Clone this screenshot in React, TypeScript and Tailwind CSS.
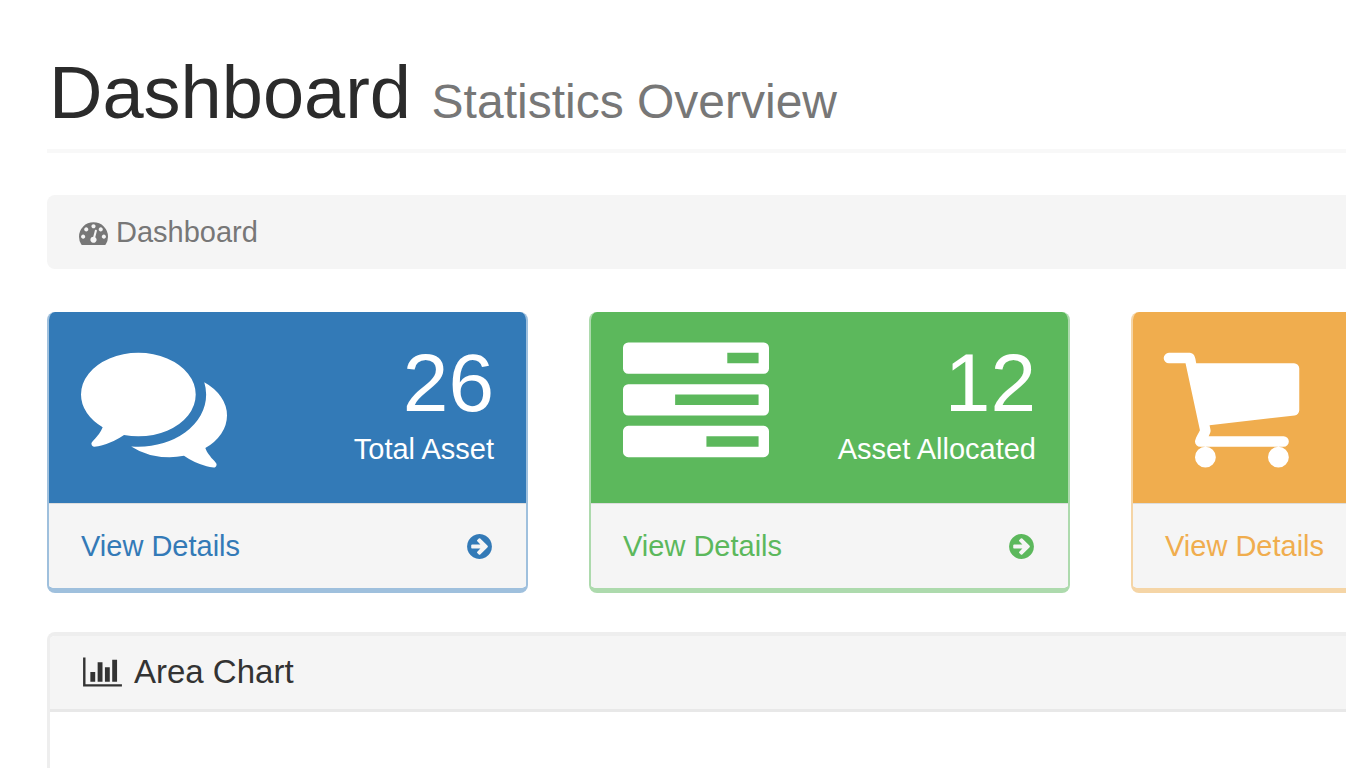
import type { ReactNode } from "react";

type IconProps = { d: string; className: string; viewBox?: string };

function Icon({ d, className, viewBox = "0 0 1792 1792" }: IconProps) {
  return (
    <svg viewBox={viewBox} className={`overflow-visible ${className}`} fill="currentColor" aria-hidden="true">
      <path d={d} />
    </svg>
  );
}

const GAUGE =
  "M384 1152q0-53-37.5-90.5t-90.5-37.5-90.5 37.5-37.5 90.5 37.5 90.5 90.5 37.5 90.5-37.5 37.5-90.5zm192-448q0-53-37.5-90.5t-90.5-37.5-90.5 37.5-37.5 90.5 37.5 90.5 90.5 37.5 90.5-37.5 37.5-90.5zm428 481l101-382q6-26-7.5-48.5t-38.5-29.5-48 6.5-30 39.5l-101 382q-60 5-107 43.5t-63 98.5q-20 77 20 146t117 89 146-20 89-117q16-60-6-117t-72-91zm660-33q0-53-37.5-90.5t-90.5-37.5-90.5 37.5-37.5 90.5 37.5 90.5 90.5 37.5 90.5-37.5 37.5-90.5zm-640-640q0-53-37.5-90.5t-90.5-37.5-90.5 37.5-37.5 90.5 37.5 90.5 90.5 37.5 90.5-37.5 37.5-90.5zm448 192q0-53-37.5-90.5t-90.5-37.5-90.5 37.5-37.5 90.5 37.5 90.5 90.5 37.5 90.5-37.5 37.5-90.5zm320 448q0 261-141 483-19 29-54 29h-1402q-35 0-54-29-141-221-141-483 0-182 71-348t191-286 286-191 348-71 348 71 286 191 191 286 71 348z";
const COMMENTS =
  "M1408 768q0 139-94 257t-256.5 186.5-353.5 68.5q-86 0-176-16-124 88-278 128-36 9-86 16h-3q-11 0-20.5-8t-11.5-21q-1-3-1-6.5t.5-6.5 2-6l2.5-5t3.5-5.5 4-5 4.5-5 4-4.5q5-6 23-25t26-29.5 22.5-29 25-38.5 20.5-44q-124-72-195-177t-71-224q0-139 94-257t256.5-186.5 353.5-68.5 353.5 68.5 256.5 186.5 94 257zm384 256q0 120-71 224.5t-195 176.5q10 24 20.5 44t25 38.5 22.5 29 26 29.5 23 25q1 1 4 4.5t4.5 5 4 5 3.5 5.5l2.5 5t2 6 .5 6.5-1 6.5q-3 14-13 22t-22 7q-50-7-86-16-154-40-278-128-90 16-176 16-271 0-472-132 58 4 88 4 161 0 309-45t264-129q125-92 192-212t67-254q0-77-23-152 129 71 204 178t75 230z";
const TASKS =
  "M1024 1408h640v-128h-640v128zm-384-512h1024v-128h-1024v128zm640-512h384v-128h-384v128zm512 832v256q0 26-19 45t-45 19h-1664q-26 0-45-19t-19-45v-256q0-26 19-45t45-19h1664q26 0 45 19t19 45zm0-512v256q0 26-19 45t-45 19h-1664q-26 0-45-19t-19-45v-256q0-26 19-45t45-19h1664q26 0 45 19t19 45zm0-512v256q0 26-19 45t-45 19h-1664q-26 0-45-19t-19-45v-256q0-26 19-45t45-19h1664q26 0 45 19t19 45z";
const CART =
  "M704 1536q0 52-38 90t-90 38-90-38-38-90 38-90 90-38 90 38 38 90zm896 0q0 52-38 90t-90 38-90-38-38-90 38-90 90-38 90 38 38 90zm128-1088v512q0 24-16.5 42.5t-40.5 21.5l-1044 122q13 60 13 70 0 16-24 64h920q26 0 45 19t19 45-19 45-45 19h-1024q-26 0-45-19t-19-45q0-11 8-31.5t16-36 21.5-40 15.5-29.5l-177-823h-204q-26 0-45-19t-19-45 19-45 45-19h256q16 0 28.5 6.5t19.5 15.5 13 24.5 8 26 5.5 29.5 4.5 26h1201q26 0 45 19t19 45z";
const ARROW =
  "M1413 896q0-27-18-45l-91-91-362-362q-18-18-45-18t-45 18l-91 91q-18 18-18 45t18 45l189 189h-502q-26 0-45 19t-19 45v128q0 26 19 45t45 19h502l-189 189q-18 18-18 45t18 45l91 91q18 18 45 18t45-18l362-362 91-91q18-18 18-45zm251 0q0 209-103 385.5t-279.5 279.5-385.5 103-385.5-103-279.5-279.5-103-385.5 103-385.5 279.5-279.5 385.5-103 385.5 103 279.5 279.5 103 385.5z";
const BARS =
  "M640 896v512h-256v-512h256zm384-512v1024h-256v-1024h256zm1024 1152v128h-2048v-1536h128v1408h1920zm-640-896v768h-256v-768h256zm384-384v1152h-256v-1152h256z";

type CardProps = {
  icon: string;
  viewBox?: string;
  border: string;
  fill: string;
  link: string;
  children?: ReactNode;
};

function StatCard({ icon, viewBox, border, fill, link, children }: CardProps) {
  return (
    <section className={`w-[481px] shrink-0 overflow-hidden rounded-lg border-2 border-t-0 border-b-[5px] ${border}`}>
      <div className={`flex h-[191px] justify-between px-8 pt-5 text-white ${fill}`}>
        <Icon d={icon} viewBox={viewBox} className="size-[146px] shrink-0" />
        <div className="pt-[6px] text-right">{children}</div>
      </div>
      <a
        href="#details"
        className={`flex h-[85px] items-center justify-between border-t border-[#ddd] bg-[#f5f5f5] px-8 text-[29px] leading-[42px] ${link}`}
      >
        <span>View Details</span>
        <Icon d={ARROW} className="size-[29px]" />
      </a>
    </section>
  );
}

function Count({ value, label }: { value: string; label: string }) {
  return (
    <>
      <div className="text-[82px] leading-[90px]">{value}</div>
      <div className="text-[29px] leading-[42px]">{label}</div>
    </>
  );
}

export default function App() {
  return (
    <main className="h-screen overflow-hidden bg-white pt-[49px] pl-[47px] font-['Liberation_Sans',Arial,sans-serif] text-[#333]">
      <h1 className="border-b-4 border-[#f8f8f8] pb-1 pl-0.5 text-[74px] leading-[87px] text-[#2b2b2b]">
        Dashboard <small className="text-[48px] text-[#777]">Statistics Overview</small>
      </h1>

      <nav aria-label="Breadcrumb" className="mt-[42px] rounded-l-lg bg-[#f5f5f5] px-8 py-4">
        <ol>
          <li className="flex items-center gap-2 text-[29px] leading-[42px] text-[#777]">
            <Icon d={GAUGE} className="size-[29px]" />
            Dashboard
          </li>
        </ol>
      </nav>

      <div className="mt-[43px] flex gap-[61px] overflow-hidden">
        <StatCard icon={COMMENTS} border="border-[#9fc0dd]" fill="bg-[#337ab7]" link="text-[#337ab7]">
          <Count value="26" label="Total Asset" />
        </StatCard>
        <StatCard icon={TASKS} border="border-[#addaad]" fill="bg-[#5cb85c]" link="text-[#5cb85c]">
          <Count value="12" label="Asset Allocated" />
        </StatCard>
        <StatCard
          icon={CART}
          viewBox="80 0 1792 1792"
          border="border-[#f5d5a6]"
          fill="bg-[#f0ad4e]"
          link="text-[#f0ad4e]"
        />
      </div>

      <section className="mt-[39px] h-[300px] overflow-hidden rounded-tl-lg border-t-4 border-l-[3px] border-[#eee]">
        <h2 className="flex items-center gap-3 border-b-[3px] border-[#e8e8e8] bg-[#f5f5f5] px-[33px] pt-[15px] pb-4 text-[33px] leading-[42px]">
          <Icon d={BARS} viewBox="0 0 2048 1792" className="h-[34px] w-[39px]" />
          Area Chart
        </h2>
      </section>
    </main>
  );
}
